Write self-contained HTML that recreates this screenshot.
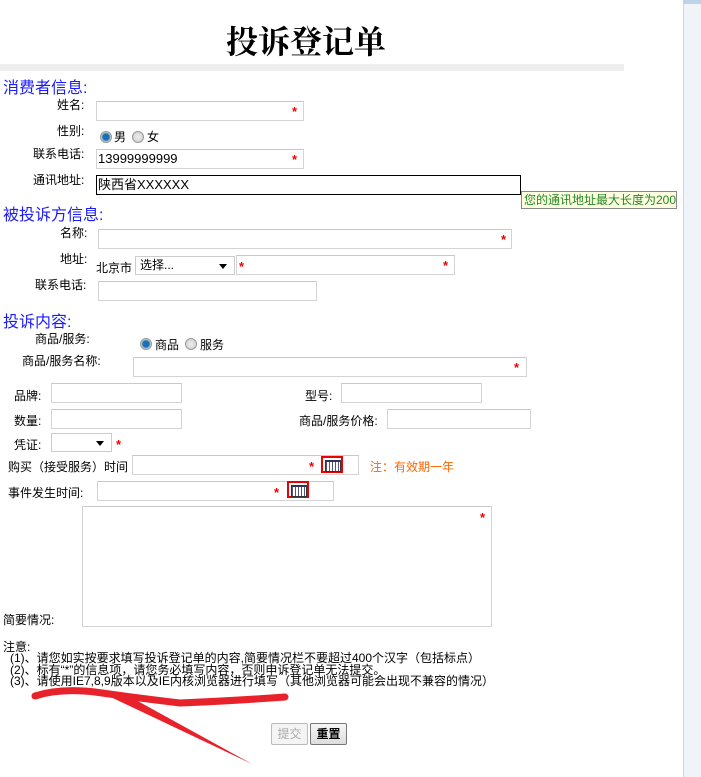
<!DOCTYPE html>
<html><head><meta charset="utf-8">
<style>
*{margin:0;padding:0;box-sizing:border-box}
body{width:701px;height:777px;background:#fff;position:relative;overflow:hidden;font-family:"Liberation Sans","Noto Sans CJK SC","WenQuanYi Zen Hei",sans-serif;font-size:12px;color:#000}
.a{position:absolute;white-space:nowrap;line-height:14px}
.in{position:absolute;border:1px solid #d4d4d4;border-top-color:#c8c8c8;background:#fff}
.st{position:absolute;color:#e00;font-size:13px;font-weight:bold;line-height:12px}
.h{position:absolute;color:#1a1aff;font-size:16px;line-height:18px;white-space:nowrap}
.r{position:absolute;width:12px;height:12px;border-radius:50%;border:1px solid #999;background:radial-gradient(circle,#eee,#ccc)}
.r.on{background:radial-gradient(circle,#1a6fb8 0,#1a6fb8 3px,#7ab 4px,#ddd 5px)}
.sel{position:absolute;border:1px solid #ccc;background:#fff}
.sel:after{content:"";position:absolute;right:7px;top:7px;border:4px solid transparent;border-top:5px solid #000}
.cal{position:absolute;width:22px;height:17px;border:2px solid #e00;background:#fff}
.cal:after{content:"";position:absolute;left:2px;top:2px;width:14px;height:9px;background:repeating-linear-gradient(90deg,#557 0 1px,#fff 1px 3px);border:1px solid #333;border-top:2px solid #335}
</style></head><body>
<div class="a" style="left:226px;top:24px;font-size:32px;line-height:36px;font-weight:bold;font-family:'Liberation Serif','Noto Serif CJK SC',serif">投诉登记单</div>
<div style="position:absolute;left:0;top:64px;width:624px;height:7px;background:#eee"></div>
<div style="position:absolute;left:683px;top:0;width:18px;height:777px;background:#f0f4f8;border-left:1px solid #c9d8e6"></div>
<div style="position:absolute;left:683px;top:0;width:18px;height:4px;background:#bcd3e8"></div>

<div class="h" style="left:3px;top:80px">消费者信息:</div>
<div class="a" style="left:57px;top:98px">姓名:</div>
<div class="in" style="left:96px;top:101px;width:208px;height:20px"></div><div class="st" style="left:292px;top:106px">*</div>
<div class="a" style="left:57px;top:124px">性别:</div>
<div class="r on" style="left:100px;top:131px"></div><div class="a" style="left:114px;top:130px">男</div>
<div class="r" style="left:132px;top:131px"></div><div class="a" style="left:147px;top:130px">女</div>
<div class="a" style="left:33px;top:147px">联系电话:</div>
<div class="in" style="left:96px;top:149px;width:208px;height:20px"></div><div class="a" style="left:98px;top:152px;font-size:13px">13999999999</div><div class="st" style="left:292px;top:154px">*</div>
<div class="a" style="left:33px;top:173px">通讯地址:</div>
<div style="position:absolute;left:96px;top:175px;width:425px;height:20px;border:1px solid #000"></div><div class="a" style="left:98px;top:178px;font-size:13px">陕西省XXXXXX</div>
<div class="a" style="left:521px;top:191px;width:156px;height:18px;border:1px solid #888;background:#ffffe1;color:#228822;line-height:16px;padding-left:2px">您的通讯地址最大长度为200</div>

<div class="h" style="left:3px;top:207px">被投诉方信息:</div>
<div class="a" style="left:60px;top:226px">名称:</div>
<div class="in" style="left:98px;top:229px;width:414px;height:20px"></div><div class="st" style="left:501px;top:234px">*</div>
<div class="a" style="left:60px;top:252px">地址:</div>
<div class="a" style="left:96px;top:261px">北京市</div>
<div class="sel" style="left:135px;top:256px;width:100px;height:19px"></div><div class="a" style="left:140px;top:258px">选择...</div>
<div class="st" style="left:239px;top:261px">*</div>
<div class="in" style="left:236px;top:255px;width:219px;height:20px;background:transparent"></div><div class="st" style="left:443px;top:260px">*</div>
<div class="a" style="left:35px;top:278px">联系电话:</div>
<div class="in" style="left:98px;top:281px;width:219px;height:20px"></div>

<div class="h" style="left:3px;top:314px">投诉内容:</div>
<div class="a" style="left:35px;top:332px">商品/服务:</div>
<div class="r on" style="left:140px;top:338px"></div><div class="a" style="left:155px;top:338px">商品</div>
<div class="r" style="left:185px;top:338px"></div><div class="a" style="left:200px;top:338px">服务</div>
<div class="a" style="left:22px;top:354px">商品/服务名称:</div>
<div class="in" style="left:133px;top:357px;width:394px;height:20px"></div><div class="st" style="left:514px;top:362px">*</div>
<div class="a" style="left:14px;top:389px">品牌:</div><div class="in" style="left:51px;top:383px;width:131px;height:20px"></div>
<div class="a" style="left:305px;top:389px">型号:</div><div class="in" style="left:341px;top:383px;width:141px;height:20px"></div>
<div class="a" style="left:14px;top:414px">数量:</div><div class="in" style="left:51px;top:409px;width:131px;height:20px"></div>
<div class="a" style="left:299px;top:414px">商品/服务价格:</div><div class="in" style="left:387px;top:409px;width:144px;height:20px"></div>
<div class="a" style="left:14px;top:438px">凭证:</div><div class="sel" style="left:51px;top:433px;width:61px;height:19px"></div><div class="st" style="left:116px;top:439px">*</div>
<div class="a" style="left:8px;top:460px">购买（接受服务）时间</div>
<div class="in" style="left:132px;top:455px;width:227px;height:20px"></div><div class="st" style="left:309px;top:461px">*</div>
<div class="cal" style="left:321px;top:456px"></div>
<div class="a" style="left:370px;top:460px;color:#f60">注：有效期一年</div>
<div class="a" style="left:8px;top:486px">事件发生时间:</div>
<div class="in" style="left:97px;top:481px;width:237px;height:20px"></div><div class="st" style="left:274px;top:487px">*</div>
<div class="cal" style="left:287px;top:481px"></div>
<div class="in" style="left:82px;top:506px;width:410px;height:121px"></div><div class="st" style="left:480px;top:512px">*</div>
<div class="a" style="left:3px;top:613px">简要情况:</div>

<div class="a" style="left:3px;top:640px">注意:</div>
<div class="a" style="left:10px;top:653px;line-height:11.5px;font-size:12px">(1)、请您如实按要求填写投诉登记单的内容,简要情况栏不要超过400个汉字（包括标点）<br>(2)、标有“*”的信息项，请您务必填写内容，否则申诉登记单无法提交。<br>(3)、请使用IE7,8,9版本以及IE内核浏览器进行填写（其他浏览器可能会出现不兼容的情况）</div>

<svg style="position:absolute;left:0;top:0" width="701" height="777">
<path d="M35 696 Q60 688 95 692 Q130 697 180 703 Q230 701 285 697" stroke="#e8222a" stroke-width="7" fill="none" stroke-linecap="round"/>
<path d="M100 692 L125 694 L252 764 Z" fill="#e8222a"/>
</svg>

<div class="a" style="left:271px;top:723px;width:37px;height:22px;border:1px solid #bbb;border-radius:2px;background:#f4f4f4;color:#aaa;text-align:center;line-height:20px">提交</div>
<div class="a" style="left:310px;top:723px;width:37px;height:22px;border:1px solid #777;border-radius:2px;background:linear-gradient(#f6f6f6,#ddd);text-align:center;line-height:20px;font-weight:bold">重置</div>
</body></html>
